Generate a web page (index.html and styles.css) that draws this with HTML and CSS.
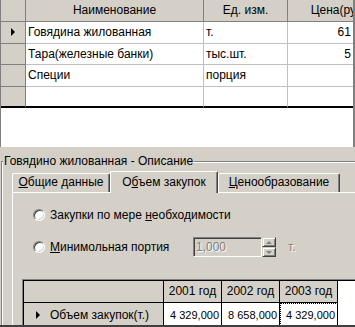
FILE: index.html
```html
<!DOCTYPE html>
<html lang="ru">
<head>
    <meta charset="UTF-8">
    <title>Номенклатура</title>
    <link rel="stylesheet" href="styles.css">
</head>
<body>
    <div class="grid">
        <div class="row head">
            <div class="ind"></div>
            <div class="cell c-name center">Наименование</div>
            <div class="cell c-unit center">Ед. изм.</div>
            <div class="cell c-price center">Цена(руб.)</div>
        </div>
        <div class="row">
            <div class="ind"><span class="marker"></span></div>
            <div class="cell c-name">Говядина жилованная</div>
            <div class="cell c-unit">т.</div>
            <div class="cell c-price num">61 200,00</div>
        </div>
        <div class="row">
            <div class="ind"></div>
            <div class="cell c-name">Тара(железные банки)</div>
            <div class="cell c-unit">тыс.шт.</div>
            <div class="cell c-price num">5 400,00</div>
        </div>
        <div class="row">
            <div class="ind"></div>
            <div class="cell c-name">Специи</div>
            <div class="cell c-unit">порция</div>
            <div class="cell c-price num"></div>
        </div>
        <div class="row last">
            <div class="ind"></div>
            <div class="cell c-name"></div>
            <div class="cell c-unit"></div>
            <div class="cell c-price"></div>
        </div>
    </div>

    <div class="panel">
        <div class="group">
            <div class="group-title">Говядино жилованная - Описание</div>
            <div class="tabs">
                <div class="tab t1"><u>О</u>бщие данные</div>
                <div class="tab t2 active">О<u>б</u>ъем закупок</div>
                <div class="tab t3"><u>Ц</u>енообразование</div>
            </div>
            <div class="page">
                <div class="opt first">
                    <span class="radio"></span>
                    <span>Закупки по мере <u>н</u>еобходимости</span>
                </div>
                <div class="opt">
                    <span class="radio"></span>
                    <span class="opt-label"><u>М</u>инимольная портия</span>
                    <span class="edit">1,000</span>
                    <span class="spin">
                        <span class="spin-btn"><span class="up"></span></span>
                        <span class="spin-btn"><span class="down"></span></span>
                    </span>
                    <span class="unit">т.</span>
                </div>
                <div class="sgrid">
                    <div class="srow">
                        <div class="scell s-label fixed"></div>
                        <div class="scell fixed center">2001 год</div>
                        <div class="scell fixed center">2002 год</div>
                        <div class="scell fixed center">2003 год</div>
                    </div>
                    <div class="srow">
                        <div class="scell s-label fixed"><span class="marker"></span>Объем закупок(т.)</div>
                        <div class="scell num">4 329,000</div>
                        <div class="scell num">8 658,000</div>
                        <div class="scell num focus">4 329,000</div>
                    </div>
                </div>
            </div>
        </div>
    </div>
</body>
</html>
```

FILE: styles.css
```css
body {
    margin: 0;
    width: 355px;
    height: 327px;
    overflow: hidden;
    font-family: "Liberation Sans", Arial, sans-serif;
    font-size: 12px;
    color: #000;
    background-color: #fff;
}

u {
    text-decoration: underline;
    text-underline-offset: 1px;
}

/* top grid */

.grid {
    height: 147px;
    box-sizing: border-box;
    border-left: 1px solid #808080;
    border-right: 2px solid #808080;
    overflow: hidden;
    background-color: #fff;
}

.row {
    display: flex;
    height: 21.5px;
}

.row.head {
    height: 22px;
}

.row > div {
    box-sizing: border-box;
    flex: none;
    border-right: 1px solid #c0c0c0;
    border-bottom: 1px solid #c0c0c0;
    line-height: 20px;
    white-space: nowrap;
    overflow: hidden;
}

.row.head > div,
.row > .ind {
    background-color: #d4d0c8;
    border-color: #808080;
}

.row.last > div {
    border-bottom: 2px solid #000;
}

.ind {
    width: 25px;
    display: flex;
    align-items: center;
    justify-content: center;
}

.cell {
    padding: 0 2px;
}

.c-name {
    width: 178px;
}

.c-unit {
    width: 84px;
}

.c-price {
    width: 106px;
}

.center {
    text-align: center;
}

.num {
    text-align: right;
}

.marker {
    display: inline-block;
    width: 0;
    height: 0;
    border-top: 4px solid transparent;
    border-bottom: 4px solid transparent;
    border-left: 4px solid #000;
}

/* bottom panel */

.panel {
    height: 180px;
    box-sizing: border-box;
    padding-top: 14px;
    background-color: #d4d0c8;
    border-bottom: 2px solid #404040;
    overflow: hidden;
}

.group {
    margin-left: 1px;
    height: 200px;
    border-top: 1px solid #808080;
    border-left: 1px solid #808080;
    box-shadow: inset 1px 1px #fff;
}

.group-title {
    width: fit-content;
    margin: -7px 0 0 1px;
    padding: 0 1px;
    line-height: 13px;
    background-color: #d4d0c8;
}

.tabs {
    display: flex;
    align-items: flex-end;
    margin-top: 3px;
    padding-left: 10px;
}

.tab {
    box-sizing: border-box;
    height: 19px;
    line-height: 17px;
    text-align: center;
    border-top: 1px solid #fff;
    border-left: 1px solid #fff;
    border-right: 1px solid #404040;
    border-radius: 2px 2px 0 0;
    box-shadow: inset -1px 0 #808080;
    white-space: nowrap;
}

.t1 {
    width: 98px;
}

.t2 {
    width: 108px;
}

.t3 {
    width: 122px;
}

.tab.active {
    height: 22px;
    line-height: 20px;
    margin-bottom: -1px;
    position: relative;
    z-index: 1;
    background-color: #d4d0c8;
}

.page {
    margin-left: 10px;
    height: 160px;
    width: 360px;
    box-sizing: border-box;
    padding-left: 9px;
    border-top: 1px solid #fff;
    border-left: 1px solid #fff;
}

.opt {
    display: flex;
    align-items: center;
    gap: 5px;
    margin-left: 11px;
    height: 20px;
    margin-top: 12px;
    white-space: nowrap;
}

.radio {
    flex: none;
    box-sizing: border-box;
    width: 12px;
    height: 12px;
    border-radius: 50%;
    border: 1px solid;
    border-color: #808080 #fff #fff #808080;
    box-shadow: inset 1px 1px #404040, inset -1px -1px #d4d0c8;
    background-color: #fff;
}

.opt-label {
    width: 138px;
}

.edit {
    box-sizing: border-box;
    width: 69px;
    height: 20px;
    padding-left: 2px;
    line-height: 18px;
    color: #808080;
    text-shadow: 1px 1px #fff;
    border: 1px solid;
    border-color: #808080 #fff #fff #808080;
    box-shadow: inset 1px 1px #404040, inset -1px -1px #d4d0c8;
}

.spin {
    display: flex;
    flex-direction: column;
    width: 14px;
    height: 20px;
    margin-left: -5px;
}

.spin-btn {
    box-sizing: border-box;
    height: 10px;
    display: flex;
    align-items: center;
    justify-content: center;
    border: 1px solid;
    border-color: #d4d0c8 #404040 #404040 #d4d0c8;
    box-shadow: inset 1px 1px #fff, inset -1px -1px #808080;
}

.up,
.down {
    width: 0;
    height: 0;
    border-left: 3px solid transparent;
    border-right: 3px solid transparent;
}

.up {
    border-bottom: 3px solid #808080;
}

.down {
    border-top: 3px solid #808080;
}

.unit {
    margin-left: 7px;
    color: #808080;
    text-shadow: 1px 1px #fff;
}

/* purchase grid */

.sgrid {
    margin-top: 22px;
    height: 60px;
    border-top: 1px solid #808080;
    border-left: 1px solid #808080;
    box-shadow: inset 1px 1px #000;
    padding: 1px 0 0 1px;
    background-color: #fff;
}

.srow {
    display: flex;
}

.scell {
    box-sizing: border-box;
    flex: none;
    width: 58px;
    height: 22px;
    line-height: 21px;
    padding: 0 2px;
    border-right: 1px solid #000;
    border-bottom: 1px solid #000;
    white-space: nowrap;
}

.srow + .srow .scell {
    height: 23px;
    line-height: 25px;
}

.scell.num {
    font-size: 11px;
}

.scell.fixed {
    background-color: #d4d0c8;
}

.s-label {
    width: 140px;
    padding-left: 12px;
}

.s-label .marker {
    margin-right: 10px;
}

.focus {
    outline: 1px dotted #000;
    outline-offset: -1px;
}
```
